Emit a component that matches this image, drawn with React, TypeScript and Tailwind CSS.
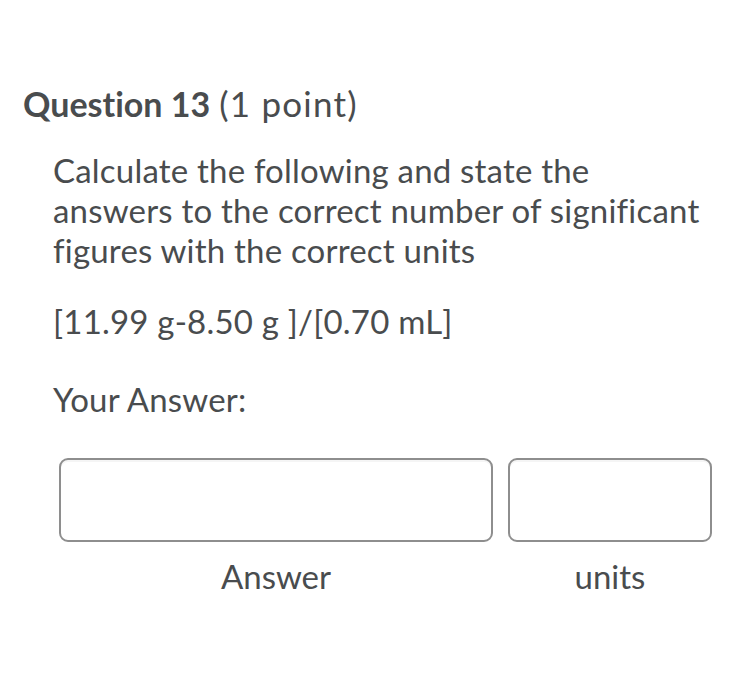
export default function App() {
  return (
    <div className="min-h-screen w-[738px] bg-white font-['Lato','Noto_Sans',sans-serif] text-[#494c4e] [font-variant-ligatures:none]">
      <div className="pt-[83px] pl-[23px]">
        <h2 className="flex items-baseline gap-[9px] leading-[40px]">
          <span className="text-[34px] font-bold">Question 13</span>
          <span className="text-[35px] tracking-[1.2px]">(1 point)</span>
        </h2>
      </div>

      <div className="pl-[53px] pr-[20px] pt-[26px] text-[33px] leading-[40px] tracking-[0.2px]">
        <p>
          Calculate the following and state the
          <br />
          answers to the correct number of significant
          <br />
          figures with the correct units
        </p>

        <p className="mt-[31px]">[11.99 g-8.50 g ]/[0.70 mL]</p>

        <p className="mt-[38px]">Your Answer:</p>
      </div>

      <div className="mt-[39px] flex gap-[15px] pl-[59px]">
        <div className="flex w-[434px] flex-col items-center">
          <input
            type="text"
            className="h-[84px] w-full rounded-[9px] border-2 border-[#8e8e8e] bg-white shadow-[inset_0_2px_0_rgba(0,0,0,0.04)]"
          />
          <span className="mt-[14px] text-[33px] leading-[40px]">Answer</span>
        </div>
        <div className="flex w-[204px] flex-col items-center">
          <input
            type="text"
            className="h-[84px] w-full rounded-[9px] border-2 border-[#8e8e8e] bg-white shadow-[inset_0_2px_0_rgba(0,0,0,0.04)]"
          />
          <span className="mt-[14px] text-[33px] leading-[40px]">units</span>
        </div>
      </div>
    </div>
  );
}
